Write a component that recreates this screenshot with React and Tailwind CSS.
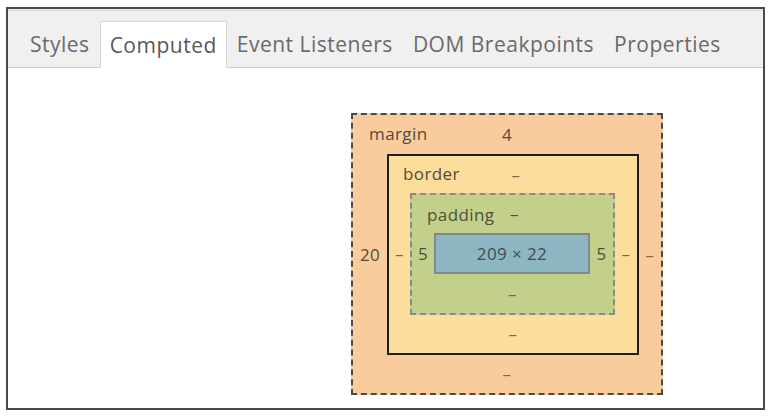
import React from 'react';

const tabs = ['Styles', 'Computed', 'Event Listeners', 'DOM Breakpoints', 'Properties'];

const Dash = () => <span className="text-[#7d6450]">–</span>;

export default function App() {
  return (
    <div className="w-[772px] h-[418px] bg-white pt-[7px] pl-[6px] font-['Open_Sans',sans-serif]">
      <div className="w-[759px] h-[403px] border-2 border-[#4a4a4a] flex flex-col">
        {/* tab bar */}
        <div className="h-[59px] bg-[#f0f0f0] border-b border-[#cfcfcf] flex flex-col">
          <div className="h-[2px] border-b border-[#dadada]" />
          <div className="flex-1 flex items-end pl-[12px]">
            {tabs.map((t) => (
              <div
                key={t}
                className={
                  t === 'Computed'
                    ? 'h-[47px] -mb-px px-[9px] pt-[2px] flex items-center bg-white border border-b-0 border-[#d6d6d6] text-[21px] tracking-[0.5px] text-[#585858]'
                    : 'h-[47px] px-[10px] pt-[2px] flex items-center text-[21px] tracking-[0.5px] text-[#6a6a6a]'
                }
              >
                {t}
              </div>
            ))}
          </div>
        </div>

        {/* box model */}
        <div className="flex-1 bg-white pl-[343px] pt-[45px] text-[17px] tracking-[0.4px] text-[#54493d]">
          {/* margin */}
          <div className="relative w-[312px] h-[282px] bg-[#f9cc9d] border-2 border-dashed border-[#4a4a4a] flex flex-col">
            <span className="absolute left-[16px] top-[6px]">margin</span>
            <div className="h-[39px] flex items-center justify-center">4</div>
            <div className="flex h-[201px]">
              <div className="w-[34px] flex items-center justify-center">20</div>
              {/* border */}
              <div className="relative w-[252px] bg-[#fddd9b] border-2 border-[#1e1e1e] flex flex-col">
                <span className="absolute left-[14px] top-[5px]">border</span>
                <div className="h-[37px] flex items-center justify-center pl-[6px]"><Dash /></div>
                <div className="flex h-[122px]">
                  <div className="w-[21px] flex items-center justify-center"><Dash /></div>
                  {/* padding */}
                  <div className="relative w-[205px] bg-[#c3d08b] border-2 border-dashed border-[#8a8a8a] flex flex-col text-[#4b5234]">
                    <span className="absolute left-[15px] top-[7px]">padding</span>
                    <div className="h-[38px] flex items-center justify-center pl-[4px]">–</div>
                    <div className="flex h-[41px]">
                      <div className="w-[22px] flex items-center justify-center">5</div>
                      <div className="w-[156px] bg-[#8cb6c1] border-2 border-[#7d8a8e] flex items-center justify-center text-[#3e4d55]">
                        209 × 22
                      </div>
                      <div className="w-[23px] flex items-center justify-center">5</div>
                    </div>
                    <div className="flex-1 flex items-center justify-center"><Dash /></div>
                  </div>
                  <div className="w-[22px] flex items-center justify-center"><Dash /></div>
                </div>
                <div className="flex-1 flex items-center justify-center"><Dash /></div>
              </div>
              <div className="w-[22px] flex items-center justify-center"><Dash /></div>
            </div>
            <div className="flex-1 flex items-center justify-center"><Dash /></div>
          </div>
        </div>
      </div>
    </div>
  );
}
